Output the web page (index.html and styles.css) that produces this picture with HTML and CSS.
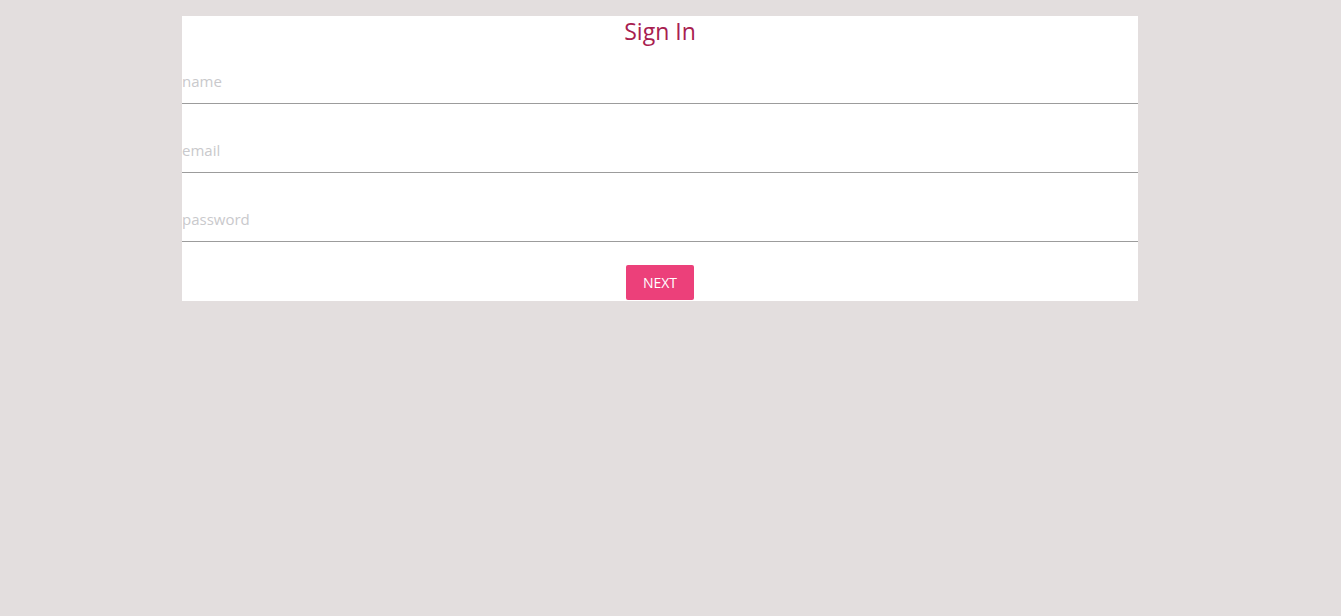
FILE: index.html
```html
<!DOCTYPE html>
<html>
<head>
<meta charset="utf-8">
<link rel="stylesheet" href="styles.css">
</head>
<body>
<div class="page">
  <form class="card">
    <h1 class="title">Sign In</h1>
    <input class="field" type="text" placeholder="name">
    <input class="field" type="email" placeholder="email">
    <input class="field" type="password" placeholder="password">
    <div class="actions">
      <button class="btn" type="button">NEXT</button>
    </div>
  </form>
</div>
</body>
</html>
```

FILE: styles.css
```css
html, body {
  margin: 0;
  padding: 0;
  background: #e3dede;
  height: 100%;
}
body {
  font-family: "Open Sans", "Noto Sans", sans-serif;
}
.page {
  padding-top: 16px;
  padding-left: 182px;
}
.card {
  width: 956px;
  background: #ffffff;
  display: flex;
  flex-direction: column;
  padding-bottom: 1px;
}
.title {
  margin: 0;
  height: 32px;
  line-height: 30px;
  text-align: center;
  font-weight: 400;
  font-size: 23px;
  color: #a8204f;
}
.field {
  display: block;
  box-sizing: border-box;
  width: 100%;
  height: 44px;
  margin: 25px 0 0 0;
  padding: 0 0 2px 0;
  border: none;
  border-bottom: 1px solid #9c9c9c;
  font-family: inherit;
  font-size: 15px;
  outline: none;
  background: transparent;
}
.field:first-of-type {
  margin-top: 12px;
}
.field::placeholder {
  color: #c9c9cc;
}
.actions {
  display: flex;
  justify-content: center;
  margin-top: 23px;
}
.btn {
  width: 68px;
  height: 35px;
  border: none;
  border-radius: 2px;
  background: #ec407a;
  color: #ffffff;
  font-family: inherit;
  font-size: 14px;
  padding: 0;
  cursor: pointer;
}
```
